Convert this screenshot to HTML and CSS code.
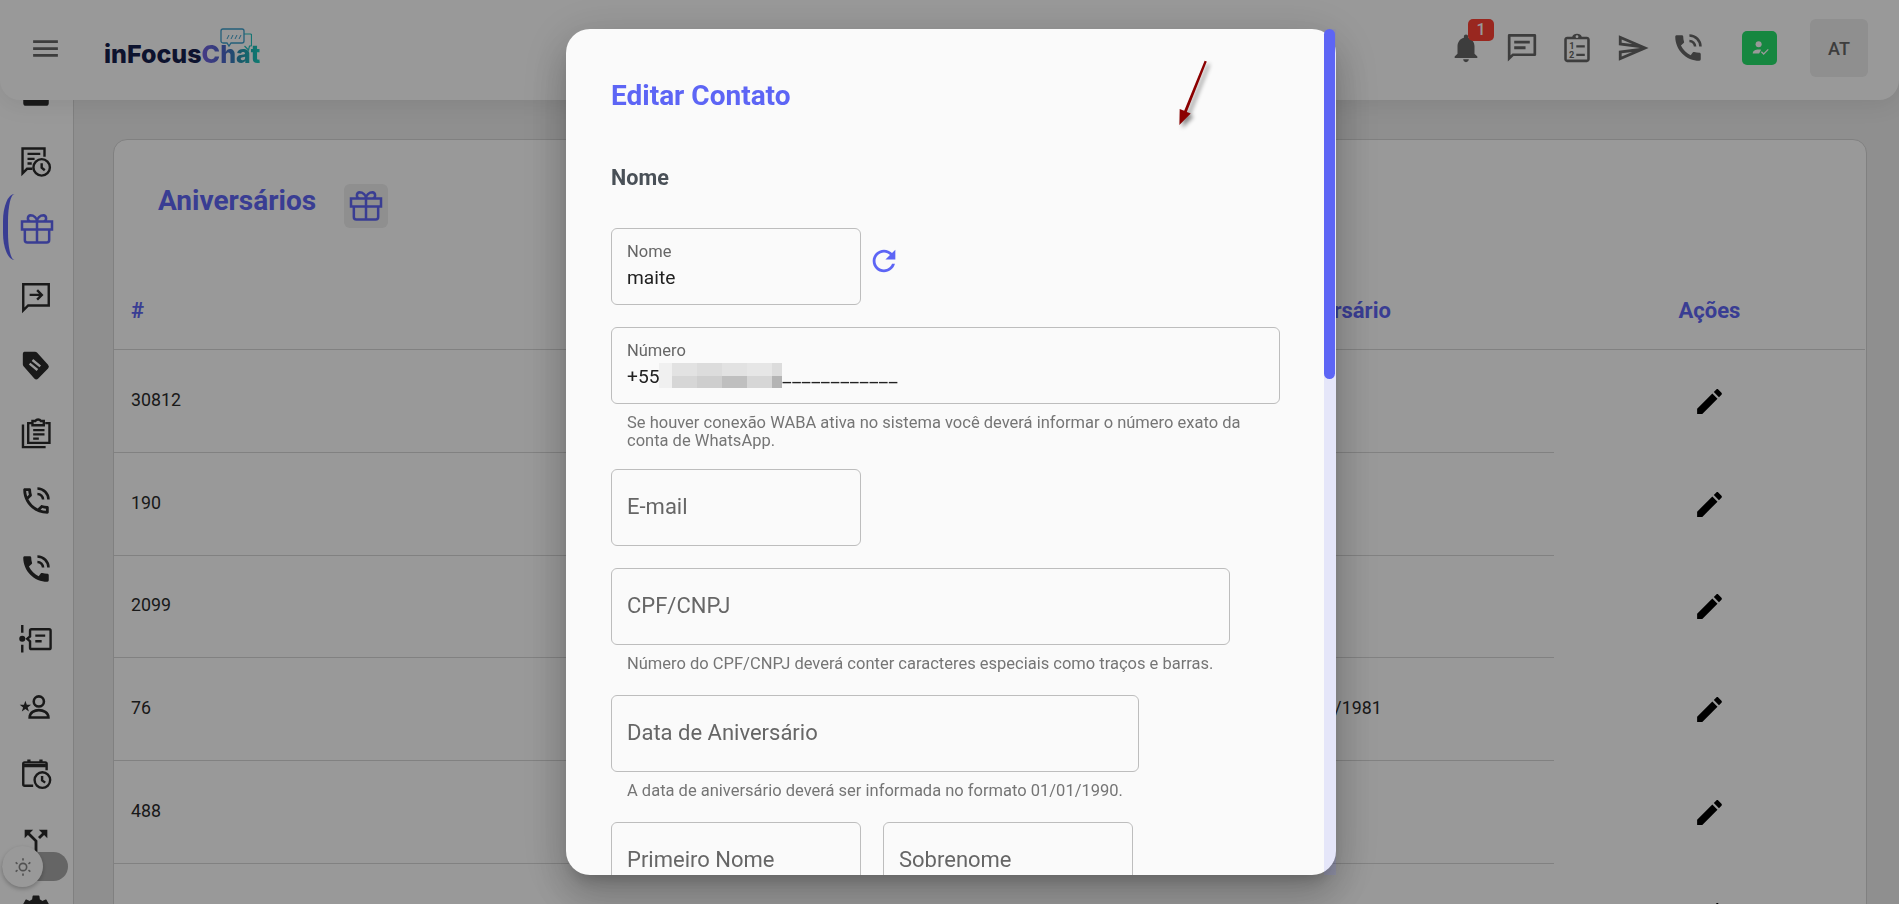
FILE: index.html
```html
<!doctype html>
<html lang="pt-BR">
<head>
  <meta charset="utf-8" />
  <title>inFocusChat - Aniversários</title>
  <link rel="stylesheet" href="styles.css">
</head>

<body>
  <header class="topbar">
    <svg class="top-menu" viewBox="0 0 24 24"><path d="M3 18h18v-2H3v2zm0-5h18v-2H3v2zm0-7v2h18V6H3z"/></svg>
    <div class="logo">
      <svg class="logo-bubbles" viewBox="0 0 32 24">
        <path class="b2" d="M24 6h6.500a1 1 0 0 1 1 1v10a1 1 0 0 1-1 1h-1l-1 4-4-4"/>
        <path class="b1" d="M3 1h19a2 2 0 0 1 2 2v10a2 2 0 0 1-2 2H11l-2 3-2-3H3a2 2 0 0 1-2-2V3a2 2 0 0 1 2-2z"/>
        <path class="b1 thin" d="M7 11l2-4M11 11l2-4M15 11l2-4M19 11l2-4"/>
      </svg>
      <span class="logo-text">inFocus</span><span class="logo-text logo-chat">Chat</span>
    </div>
    <div class="top-actions">
      <div class="top-icon">
        <svg viewBox="0 0 24 24"><path d="M12 22c1.100 0 2-.9 2-2h-4c0 1.100.89 2 2 2zm6-6v-5c0-3.070-1.640-5.640-4.500-6.320V4c0-.83-.67-1.500-1.500-1.500s-1.500.67-1.500 1.500v.68C7.630 5.360 6 7.920 6 11v5l-2 2v1h16v-1l-2-2z"/></svg>
        <span class="badge">1</span>
      </div>
      <div class="top-icon">
        <svg viewBox="0 0 24 24"><path d="M21 2.200H3a1 1 0 0 0-1 1v18.300l4-3.800h15a1 1 0 0 0 1-1V3.200a1 1 0 0 0-1-1zm-.9 13.600H5.300l-1.400 1.400V4h16.200v11.800zM6.500 10.800h8v2h-8zM6.500 6.800h11v2h-11z"/></svg>
      </div>
      <div class="top-icon">
        <svg viewBox="0 0 24 24">
          <path d="M19 4h-3.600C15 2.800 13.600 2 12 2s-3 .8-3.400 2H5c-1 0-2 .9-2 2v14c0 1.100 1 2 2 2h14c1 0 2-.9 2-2V6c0-1.100-1-2-2-2zm.2 16.200H4.800V5.800h14.400v14.400z"/>
          <circle cx="12" cy="4" r="1" class="hole"/>
          <text x="6.500" y="12.500" class="clip-num">1</text>
          <text x="6.300" y="18.800" class="clip-num">2</text>
          <path d="M11.500 10h6v1.700h-6zM11.500 16h6v1.700h-6z"/>
        </svg>
      </div>
      <div class="top-icon">
        <svg viewBox="0 0 24 24"><path d="M4.010 6.030l7.510 3.220-7.520-1 .01-2.220m7.500 8.720L4 17.970v-2.220l7.510-1M2.010 3L2 10l15 2-15 2 .01 7L23 12 2.010 3z"/></svg>
      </div>
      <div class="top-icon">
        <svg viewBox="0 0 24 24">
          <path d="M20.010 15.380c-1.230 0-2.420-.2-3.530-.56-.35-.12-.74-.03-1.010.24l-1.570 1.970c-2.830-1.350-5.480-3.900-6.890-6.830l1.950-1.660c.27-.28.35-.67.24-1.020-.37-1.110-.56-2.300-.56-3.530 0-.54-.45-.99-.99-.99H4.190C3.650 3 3 3.240 3 3.990 3 13.280 10.730 21 20.010 21c.71 0 .99-.63.99-1.180v-3.450c0-.54-.45-.99-.99-.99z"/>
          <path class="wave" d="M13 3.200a7.800 7.800 0 0 1 7.800 7.800M13 7a4 4 0 0 1 4 4"/>
        </svg>
      </div>
      <div class="status">
        <svg viewBox="0 0 24 24">
          <circle cx="10.500" cy="8" r="3.300"/>
          <path d="M4 18c0-3 3-4.500 6.500-4.500 1 0 2 .1 2.800.4L11 18z"/>
          <path class="check" d="M13.500 16l2.500 2.500 5-5"/>
        </svg>
      </div>
      <div class="avatar">AT</div>
    </div>
  </header>

  <div class="app">
    <nav class="sidebar">
      <div class="side-item"><svg viewBox="0 0 24 24"><rect x="3" y="3" width="18" height="18" rx="2"/></svg></div>
      <div class="side-item">
        <svg viewBox="0 0 24 24" class="line">
          <path d="M18 9V3.200H2.500v17.500l3.200-3.200H9.500M6 7h9M6 10.500h5M6 13.800h3"/>
          <circle cx="16" cy="16.500" r="5.800"/>
          <path d="M16 13.500v3.200l2.200 1.800"/>
        </svg>
      </div>
      <div class="side-item active">
        <svg viewBox="0 0 24 24" class="gift"><use href="#gift"/></svg>
      </div>
      <div class="side-item">
        <svg viewBox="0 0 24 24" class="line">
          <path d="M3 3h18v15H6.500L3 21.500zM7.500 10.500h8.500M12.800 7.200l3.300 3.300-3.300 3.300"/>
        </svg>
      </div>
      <div class="side-item">
        <svg viewBox="0 0 24 24">
          <path d="M3.700 2.600h7.500a2 2 0 0 1 1.500.6l7.800 8.600a2 2 0 0 1 0 2.700l-6.900 7a2 2 0 0 1-2.800 0l-7.600-8.700a2 2 0 0 1-.5-1.300V4a1.400 1.400 0 0 1 1-1.400z"/>
          <path class="tag-cut" d="M9.500 8.500l5.500 4.500M7.500 11l5.500 4.500"/>
        </svg>
      </div>
      <div class="side-item">
        <svg viewBox="0 0 24 24" class="line">
          <path d="M2.800 6v16h16"/>
          <path d="M9.500 5H6.500v14h15V5h-3M9.500 3.500h2a2.500 2.500 0 0 1 4 0h2V6.500h-8z"/>
          <path d="M10 10h8M10 13h8M10 16h4"/>
        </svg>
      </div>
      <div class="side-item">
        <svg viewBox="0 0 24 24">
          <path d="M6.540 5c.06.89.21 1.760.45 2.590l-1.200 1.200c-.41-1.200-.67-2.470-.76-3.790h1.510m9.860 12.020c.85.24 1.720.39 2.600.45v1.490c-1.320-.09-2.590-.35-3.800-.75l1.200-1.190M7.500 3H4c-.55 0-1 .45-1 1 0 9.390 7.610 17 17 17 .55 0 1-.45 1-1v-3.490c0-.55-.45-1-1-1-1.240 0-2.450-.2-3.570-.57-.1-.04-.21-.05-.31-.05-.26 0-.51.1-.71.29l-2.200 2.200c-2.830-1.450-5.150-3.760-6.590-6.590l2.200-2.200c.28-.28.36-.67.25-1.020C8.700 6.450 8.500 5.250 8.500 4c0-.55-.45-1-1-1z"/>
          <path class="wave" d="M13 3.200a7.800 7.800 0 0 1 7.800 7.800M13 7a4 4 0 0 1 4 4"/>
        </svg>
      </div>
      <div class="side-item">
        <svg viewBox="0 0 24 24">
          <path d="M20.010 15.380c-1.230 0-2.420-.2-3.530-.56-.35-.12-.74-.03-1.010.24l-1.570 1.970c-2.830-1.350-5.480-3.900-6.890-6.830l1.950-1.660c.27-.28.35-.67.24-1.020-.37-1.110-.56-2.300-.56-3.530 0-.54-.45-.99-.99-.99H4.190C3.650 3 3 3.240 3 3.990 3 13.280 10.730 21 20.010 21c.71 0 .99-.63.99-1.180v-3.450c0-.54-.45-.99-.99-.99z"/>
          <path class="wave" d="M13 3.200a7.800 7.800 0 0 1 7.800 7.800M13 7a4 4 0 0 1 4 4"/>
        </svg>
      </div>
      <div class="side-item">
        <svg viewBox="0 0 24 24" class="line">
          <path d="M2.300 3.500v5.500M2.300 17.500v5.500"/>
          <circle cx="2.300" cy="13.200" r="1.300" class="dot"/>
          <path d="M7.800 11.600V7.500a1 1 0 0 1 1-1h12.500a1 1 0 0 1 1 1v12a1 1 0 0 1-1 1H8.800a1 1 0 0 1-1-1v-4.500l-2-1.700zM11.500 11h7M11.500 15h4.500"/>
        </svg>
      </div>
      <div class="side-item">
        <svg viewBox="0 0 24 24">
          <polygon points="4.500,9 5.500,11.800 8.500,11.900 6.100,13.700 7,16.600 4.500,14.900 2,16.600 2.900,13.700 .5,11.900 3.500,11.800"/>
          <circle cx="14" cy="9.500" r="3.600" class="open"/>
          <path class="open" d="M7.500 20.800c0-3.500 3.500-5.200 6.500-5.200s6.800 1.700 6.800 5.200z"/>
        </svg>
      </div>
      <div class="side-item">
        <svg viewBox="0 0 24 24" class="line">
          <path d="M10 21H4a1 1 0 0 1-1-1V5.500a1 1 0 0 1 1-1h14.500a1 1 0 0 1 1 1V10"/>
          <path class="heavy" d="M3.500 6.800h15.500M7 2.500V5M15.500 2.500V5"/>
          <circle cx="16.500" cy="17" r="5.500"/>
          <path d="M16.300 14.200v3l2.200 1.600"/>
        </svg>
      </div>
      <div class="side-item">
        <svg viewBox="0 0 24 24"><path d="M14 4l2.290 2.290-2.880 2.880 1.420 1.420 2.880-2.880L20 10V4h-6zm-4 0H4v6l2.290-2.290 4.710 4.700V20h2v-8.410l-5.290-5.300L10 4z"/></svg>
      </div>
      <div class="side-item">
        <svg viewBox="0 0 24 24"><path d="M19.140 12.940c.04-.3.06-.61.06-.94 0-.32-.02-.64-.07-.94l2.030-1.580c.18-.14.23-.41.12-.61l-1.920-3.320c-.12-.22-.37-.29-.59-.22l-2.390.96c-.5-.38-1.030-.7-1.620-.94l-.36-2.540c-.04-.24-.24-.41-.48-.41h-3.840c-.24 0-.43.17-.47.41l-.36 2.540c-.59.24-1.130.57-1.620.94l-2.390-.96c-.22-.08-.47 0-.59.22L2.740 8.870c-.12.21-.08.47.12.61l2.030 1.580c-.05.3-.09.63-.09.94s.02.64.07.94l-2.030 1.580c-.18.14-.23.41-.12.61l1.920 3.320c.12.22.37.29.59.22l2.390-.96c.5.38 1.030.7 1.620.94l.36 2.540c.05.24.24.41.48.41h3.840c.24 0 .44-.17.47-.41l.36-2.540c.59-.24 1.130-.56 1.620-.94l2.390.96c.22.08.47 0 .59-.22l1.920-3.320c.12-.22.07-.47-.12-.61l-2.010-1.580zM12 15.600c-1.980 0-3.600-1.620-3.600-3.600s1.620-3.600 3.600-3.600 3.600 1.620 3.600 3.600-1.620 3.600-3.600 3.600z"/></svg>
      </div>
    </nav>

    <main class="content">
      <section class="card">
        <div class="card-head">
          <h2>Aniversários</h2>
          <div class="gift-badge"><svg viewBox="0 0 24 24" class="gift"><use href="#gift"/></svg></div>
        </div>
        <div class="grid-row grid-head">
          <div>#</div><div>Nome</div><div class="head-date">Aniversário</div><div class="center">Ações</div>
        </div>
        <div class="grid-row">
          <div>30812</div><div></div><div></div>
          <div class="center"><svg class="edit" viewBox="0 0 24 24"><use href="#pencil"/></svg></div>
        </div>
        <div class="grid-row">
          <div>190</div><div></div><div></div>
          <div class="center"><svg class="edit" viewBox="0 0 24 24"><use href="#pencil"/></svg></div>
        </div>
        <div class="grid-row">
          <div>2099</div><div></div><div></div>
          <div class="center"><svg class="edit" viewBox="0 0 24 24"><use href="#pencil"/></svg></div>
        </div>
        <div class="grid-row">
          <div>76</div><div></div><div>12/06/1981</div>
          <div class="center"><svg class="edit" viewBox="0 0 24 24"><use href="#pencil"/></svg></div>
        </div>
        <div class="grid-row">
          <div>488</div><div></div><div></div>
          <div class="center"><svg class="edit" viewBox="0 0 24 24"><use href="#pencil"/></svg></div>
        </div>
        <div class="grid-row">
          <div></div><div></div><div></div>
          <div class="center"><svg class="edit" viewBox="0 0 24 24"><use href="#pencil"/></svg></div>
        </div>
      </section>
    </main>
  </div>

  <div class="theme-toggle">
    <div class="knob">
      <svg viewBox="0 0 24 24">
        <circle cx="12" cy="12" r="4"/>
        <path d="M12 2.500v2.500M12 19v2.500M4 7l2 1.500M18 15.500l2 1.500M4 17l2-1.500M18 8.500L20 7"/>
      </svg>
    </div>
  </div>

  <div class="backdrop">
    <div class="modal">
      <div class="modal-scroll">
        <form class="modal-form">
          <h2>Editar Contato</h2>
          <h3>Nome</h3>

          <div class="row group">
            <div class="field field-sm">
              <span class="label">Nome</span>
              <span class="value">maite</span>
            </div>
            <svg class="refresh" viewBox="0 0 24 24"><path d="M17.650 6.350C16.200 4.900 14.210 4 12 4c-4.420 0-7.990 3.580-7.990 8s3.570 8 7.990 8c3.730 0 6.840-2.550 7.730-6h-2.080c-.82 2.330-3.040 4-5.650 4-3.310 0-6-2.690-6-6s2.690-6 6-6c1.660 0 3.140.69 4.220 1.780L13 11h7V4l-2.350 2.350z"/></svg>
          </div>

          <div class="group group-tight">
            <div class="field field-full">
              <span class="label">Número</span>
              <span class="value">+55<span class="mosaic">
                <i class="s1"></i><i class="s3"></i><i class="s4"></i><i class="s3"></i><i class="s2"></i><i class="s4"></i>
                <i class="s1"></i><i class="s5"></i><i class="s6"></i><i class="s7"></i><i class="s5"></i><i class="s8"></i>
              </span><span class="mask">____________</span></span>
            </div>
            <p class="helper">Se houver conexão WABA ativa no sistema você deverá informar o número exato da conta de WhatsApp.</p>
          </div>

          <div class="group">
            <div class="field field-sm empty"><span class="label">E-mail</span></div>
          </div>

          <div class="group">
            <div class="field field-cpf empty"><span class="label">CPF/CNPJ</span></div>
            <p class="helper">Número do CPF/CNPJ deverá conter caracteres especiais como traços e barras.</p>
          </div>

          <div class="group">
            <div class="field field-date empty"><span class="label">Data de Aniversário</span></div>
            <p class="helper">A data de aniversário deverá ser informada no formato 01/01/1990.</p>
          </div>

          <div class="row row-names group">
            <div class="field field-sm empty"><span class="label">Primeiro Nome</span></div>
            <div class="field field-sm empty"><span class="label">Sobrenome</span></div>
          </div>
        </form>
      </div>

      <div class="scrollbar"><div class="scroll-thumb"></div></div>
      <svg class="note-arrow" viewBox="0 0 46 78"><polygon points="36.800,4.500 34.600,3.800 14.200,53.700 9.700,51.900 9.400,68 20.700,56.500 16.800,54.900"/></svg>
    </div>
  </div>

  <svg class="defs" width="0" height="0">
    <symbol id="gift" viewBox="0 0 24 24">
      <path d="M3 7.500h18v4.800H3zM12 7.500v12.600M4.700 12.300v6.300a1.500 1.500 0 0 0 1.500 1.500h11.600a1.500 1.500 0 0 0 1.500-1.500v-6.300M8 7.500a1.900 1.900 0 0 1 0-3.700c2.200 0 4 1.700 4 3.700M16 7.500a1.900 1.900 0 0 0 0-3.700c-2.200 0-4 1.700-4 3.700"/>
    </symbol>
    <symbol id="pencil" viewBox="0 0 24 24">
      <path d="M3 17.250V21h3.750L17.810 9.940l-3.750-3.750L3 17.250zM20.710 7.040c.39-.39.39-1.020 0-1.410l-2.340-2.340c-.39-.39-1.020-.39-1.410 0l-1.830 1.830 3.750 3.750 1.830-1.830z"/>
    </symbol>
  </svg>
</body>
</html>
```

FILE: styles.css
```css
* {
  box-sizing: border-box;
}
html, body {
  height: 100%;
}
body {
  margin: 0;
  overflow: hidden;
  font-family: Roboto, "Liberation Sans", sans-serif;
  color: #2b2b2b;
  background: #eeeeee;
}
svg {
  display: block;
  fill: currentColor;
}
.defs {
  position: absolute;
}

/* top bar */
.topbar {
  position: absolute;
  top: 0;
  left: 0;
  right: 0;
  z-index: 2;
  display: flex;
  align-items: center;
  height: 100px;
  padding: 0 31px 4px 29px;
  background: #ffffff;
  border-radius: 0 0 20px 20px;
  box-shadow: 0 4px 24px rgba(0, 0, 0, 0.08);
}
.top-menu {
  width: 33px;
  height: 33px;
  color: #666666;
}
.logo {
  position: relative;
  margin: 12px 0 0 42px;
  font-family: Inter, sans-serif;
  font-size: 25px;
  font-weight: 800;
  line-height: 30px;
  color: #16204e;
}
.logo-text {
  position: relative;
}
.logo-chat {
  background: linear-gradient(90deg, #7361e0 0%, #4a68c8 40%, #2a92b0 65%, #19d0bd 100%);
  -webkit-background-clip: text;
  background-clip: text;
  color: transparent;
}
.logo-bubbles {
  position: absolute;
  top: -11px;
  left: 116px;
  width: 32px;
  height: 24px;
  fill: none;
}
.logo-bubbles .b1 {
  stroke: #3b9fcc;
  stroke-width: 1.300;
  fill: none;
}
.logo-bubbles .b1.thin {
  stroke-width: 1;
}
.logo-bubbles .b2 {
  stroke: #22c3c0;
  stroke-width: 1.200;
  fill: none;
}
.top-actions {
  display: flex;
  align-items: center;
  margin-left: auto;
}
.top-icon {
  position: relative;
  width: 34px;
  height: 34px;
  margin-right: 21.500px;
  color: #666666;
}
.top-icon svg {
  width: 34px;
  height: 34px;
}
.status {
  display: flex;
  align-items: center;
  justify-content: center;
  width: 35px;
  height: 34px;
  margin: 0 33px 0 15.500px;
  background: #26e16b;
  border-radius: 5px;
  color: #ffffff;
}
.status svg {
  width: 22px;
  height: 22px;
}
.status .check {
  fill: none;
  stroke: #ffffff;
  stroke-width: 1.500;
}
.avatar {
  display: flex;
  align-items: center;
  justify-content: center;
  width: 58px;
  height: 58px;
  background: #eeeeee;
  border-radius: 6px;
  font-size: 18px;
  font-weight: 500;
  color: #666666;
}
.badge {
  position: absolute;
  top: -12px;
  left: 19px;
  width: 26px;
  height: 22px;
  background: #ff4135;
  border-radius: 5px;
  color: #ffffff;
  font-size: 16px;
  font-weight: 500;
  line-height: 22px;
  text-align: center;
}
.clip-num {
  font-family: Roboto, sans-serif;
  font-size: 6.500px;
  font-weight: 700;
}
.hole {
  fill: #ffffff;
}
.wave {
  fill: none;
  stroke: currentColor;
  stroke-width: 1.800;
}

/* shell */
.app {
  display: grid;
  grid-template-columns: 74px 1fr;
  height: 100%;
  overflow: hidden;
}
.sidebar {
  padding-top: 59px;
  background: #ffffff;
  border-right: 1px solid #d6d6d6;
}
.side-item {
  position: relative;
  display: flex;
  align-items: center;
  justify-content: center;
  height: 68px;
  padding-right: 1px;
}
.side-item svg {
  width: 34px;
  height: 34px;
}
.side-item .line {
  fill: none;
  stroke: currentColor;
  stroke-width: 1.700;
}
.side-item .dot {
  fill: currentColor;
}
.side-item .open {
  fill: none;
  stroke: currentColor;
  stroke-width: 1.800;
}
.side-item .heavy {
  stroke-width: 2.300;
}
.tag-cut {
  fill: none;
  stroke: #ffffff;
  stroke-width: 1.700;
}
.side-item.active::before {
  content: '';
  position: absolute;
  top: -1px;
  left: 3px;
  width: 18px;
  height: 66px;
  border-left: 5px solid #6066f5;
  border-radius: 14px / 33px;
}
.gift {
  fill: none;
  stroke: #6066f5;
  stroke-width: 1.500;
}
.side-item svg.gift {
  width: 40px;
  height: 40px;
  margin-left: 2px;
}

/* birthdays card */
.content {
  padding: 139px 32px 0 39px;
  overflow: hidden;
}
.card {
  background: #ffffff;
  border: 1px solid #d6d6d6;
  border-radius: 14px;
  min-height: 900px;
}
.card-head {
  display: flex;
  align-items: flex-start;
  padding: 44px 0 44px 44px;
}
.card-head h2 {
  margin: 1px 0 0;
  color: #6066f5;
  font-size: 28px;
  font-weight: 700;
  line-height: 32px;
}
.gift-badge {
  display: flex;
  align-items: center;
  justify-content: center;
  width: 44px;
  height: 44px;
  margin-left: 28px;
  background: #eeeeee;
  border-radius: 6px;
}
.gift-badge svg {
  width: 40px;
  height: 40px;
}
.grid-row {
  display: grid;
  grid-template-columns: 578px 578px 284px 311px;
  height: 102.800px;
  font-size: 17.800px;
}
.grid-row > div {
  display: flex;
  align-items: center;
  padding: 0 0 3px 17px;
  border-bottom: 1px solid #d8d8d8;
}
.grid-row > .center {
  justify-content: center;
  padding: 0;
  border-bottom: 0;
}
.grid-head {
  height: 78px;
  color: #6066f5;
  font-size: 22px;
  font-weight: 700;
}
.grid-head > div {
  padding-bottom: 1px;
}
.grid-head > .center {
  border-bottom: 1px solid #d8d8d8;
}
.grid-head > .head-date {
  padding-left: 8px;
}
.edit {
  width: 33px;
  height: 33px;
  color: #000000;
}

/* theme switch */
.theme-toggle {
  position: absolute;
  left: 2px;
  top: 852px;
  z-index: 1;
  width: 66px;
  height: 29px;
  background: #a9a9a9;
  border-radius: 15px;
}
.knob {
  position: absolute;
  left: 0;
  top: -6px;
  display: flex;
  align-items: center;
  justify-content: center;
  width: 41px;
  height: 41px;
  background: #ffffff;
  border-radius: 50%;
  box-shadow: 0 2px 4px rgba(0, 0, 0, 0.25);
}
.knob svg {
  width: 22px;
  height: 22px;
  fill: none;
  stroke: #888888;
  stroke-width: 1.800;
}

/* edit contact dialog */
.backdrop {
  position: fixed;
  inset: 0;
  z-index: 3;
  display: flex;
  align-items: center;
  justify-content: center;
  padding-left: 3px;
  background: rgba(0, 0, 0, 0.4);
}
.modal {
  position: relative;
  width: 770px;
  height: 846px;
  background: #fafafa;
  border-radius: 24px;
  box-shadow: 0 11px 15px -7px rgba(0, 0, 0, 0.2), 0 24px 38px 3px rgba(0, 0, 0, 0.14), 0 9px 46px 8px rgba(0, 0, 0, 0.12);
}
.modal-scroll {
  height: 100%;
  overflow: hidden;
}
.scrollbar {
  position: absolute;
  top: 0;
  right: 0;
  bottom: 0;
  width: 12px;
  background: rgba(93, 101, 245, 0.13);
}
.scroll-thumb {
  width: 11px;
  height: 350px;
  background: #5d65f5;
  border-radius: 6px;
}
.modal-form {
  padding: 51px 0 0 45px;
}
.modal-form h2 {
  margin: 0;
  color: #5d65f5;
  font-size: 28px;
  font-weight: 700;
  line-height: 32px;
}
.modal-form h3 {
  margin: 54px 0 38px;
  color: #495057;
  font-size: 21.600px;
  font-weight: 700;
  line-height: 24px;
}
.row {
  display: flex;
  align-items: flex-start;
}
.row-names {
  gap: 22px;
}
.group {
  margin-bottom: 22px;
}
.group-tight {
  margin-bottom: 19px;
}
.field {
  display: flex;
  flex-direction: column;
  height: 77px;
  padding: 13px 15px 0;
  background: transparent;
  border: 1px solid #bdbdbd;
  border-radius: 6px;
}
.field-sm {
  width: 250px;
}
.field-full {
  width: 669px;
}
.field-cpf {
  width: 619px;
}
.field-date {
  width: 528px;
}
.label {
  color: #666666;
  font-size: 16.500px;
  line-height: 20px;
}
.value {
  display: flex;
  align-items: center;
  height: 24px;
  margin-top: 4px;
  color: #212121;
  font-size: 19.200px;
  line-height: 24px;
}
.empty {
  justify-content: center;
  padding-top: 0;
  padding-bottom: 1px;
}
.empty .label {
  font-size: 22px;
  line-height: 26px;
}
.refresh {
  width: 34px;
  height: 34px;
  margin: 16px 0 0 6px;
  color: #5d65f5;
}
.helper {
  margin: 10px 0 0;
  padding: 0 32px 0 16px;
  max-width: 669px;
  color: #757575;
  font-size: 16.500px;
  line-height: 18px;
}
.mosaic {
  display: inline-grid;
  grid-template-columns: 13px 25px 25px 25px 25px 10px;
  grid-template-rows: 13px 12px;
  margin: -3px 0 0;
}
.mosaic i {
  display: block;
}
.mask {
  margin-top: -2px;
  letter-spacing: 1px;
}
.s1 { background: #f0f0f0; }
.s2 { background: #e6e6e6; }
.s3 { background: #e2e2e2; }
.s4 { background: #dcdcdc; }
.s5 { background: #d6d6d6; }
.s6 { background: #cecece; }
.s7 { background: #bfbfbf; }
.s8 { background: #b4b4b4; }
.note-arrow {
  position: absolute;
  left: 604px;
  top: 28px;
  width: 46px;
  height: 78px;
  fill: #8b0000;
  filter: drop-shadow(3px 3px 2px rgba(0, 0, 0, 0.45));
}
```
